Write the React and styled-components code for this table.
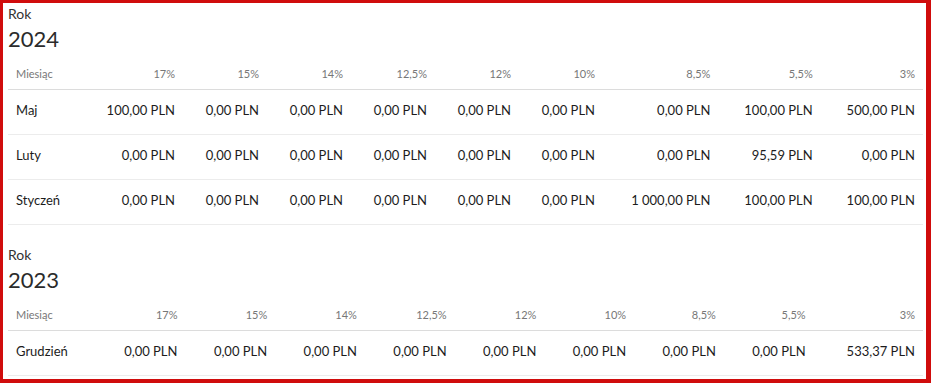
import React from "react";
import styled, { createGlobalStyle } from "styled-components";

const GlobalStyle = createGlobalStyle`
  html, body {
    margin: 0;
    padding: 0;
    background: #ffffff;
    font-family: Lato, "Open Sans", sans-serif;
  }
`;

const Frame = styled.div`
  box-sizing: border-box;
  width: 931px;
  height: 383px;
  overflow: hidden;
  border: 3px solid #d00c0c;
  border-right-width: 5px;
  border-bottom-width: 4px;
  padding: 0 3px 0 5px;
`;

const YearSection = styled.section`
  padding-top: 2px;
  margin-bottom: 19px;
`;

const YearLabel = styled.div`
  font-size: 14px;
  line-height: 17px;
  color: #333333;
`;

const YearValue = styled.div`
  margin-top: 4px;
  font-size: 22px;
  line-height: 26px;
  color: #2b2b2b;
`;

const Table = styled.table`
  width: 100%;
  border-collapse: collapse;
  table-layout: auto;
`;

const HeadCell = styled.th`
  padding: 15px 8px 9px;
  font-size: 11px;
  line-height: 13px;
  font-weight: 400;
  color: #777777;
  text-align: ${({ $left }) => ($left ? "left" : "right")};
  border-bottom: 1px solid #dcdcdc;
  white-space: nowrap;
`;

const Cell = styled.td`
  padding: 10px 8px 14px;
  font-size: 13px;
  line-height: 20px;
  color: #1c1c1c;
  text-align: ${({ $left }) => ($left ? "left" : "right")};
  border-bottom: 1px solid #ececec;
  white-space: nowrap;
`;

const rates = ["17%", "15%", "14%", "12,5%", "12%", "10%", "8,5%", "5,5%", "3%"];

const years = [
  {
    year: "2024",
    rows: [
      {
        month: "Maj",
        values: ["100,00", "0,00", "0,00", "0,00", "0,00", "0,00", "0,00", "100,00", "500,00"],
      },
      {
        month: "Luty",
        values: ["0,00", "0,00", "0,00", "0,00", "0,00", "0,00", "0,00", "95,59", "0,00"],
      },
      {
        month: "Styczeń",
        values: ["0,00", "0,00", "0,00", "0,00", "0,00", "0,00", "1 000,00", "100,00", "100,00"],
      },
    ],
  },
  {
    year: "2023",
    rows: [
      {
        month: "Grudzień",
        values: ["0,00", "0,00", "0,00", "0,00", "0,00", "0,00", "0,00", "0,00", "533,37"],
      },
    ],
  },
];

const YearTable = ({ year, rows }) => (
  <YearSection>
    <YearLabel>Rok</YearLabel>
    <YearValue>{year}</YearValue>
    <Table>
      <thead>
        <tr>
          <HeadCell $left>Miesiąc</HeadCell>
          {rates.map((r) => (
            <HeadCell key={r}>{r}</HeadCell>
          ))}
        </tr>
      </thead>
      <tbody>
        {rows.map((row) => (
          <tr key={row.month}>
            <Cell $left>{row.month}</Cell>
            {row.values.map((v, i) => (
              <Cell key={i}>{v}&nbsp;PLN</Cell>
            ))}
          </tr>
        ))}
      </tbody>
    </Table>
  </YearSection>
);

export default function App() {
  return (
    <>
      <GlobalStyle />
      <Frame>
        {years.map((y) => (
          <YearTable key={y.year} year={y.year} rows={y.rows} />
        ))}
      </Frame>
    </>
  );
}
